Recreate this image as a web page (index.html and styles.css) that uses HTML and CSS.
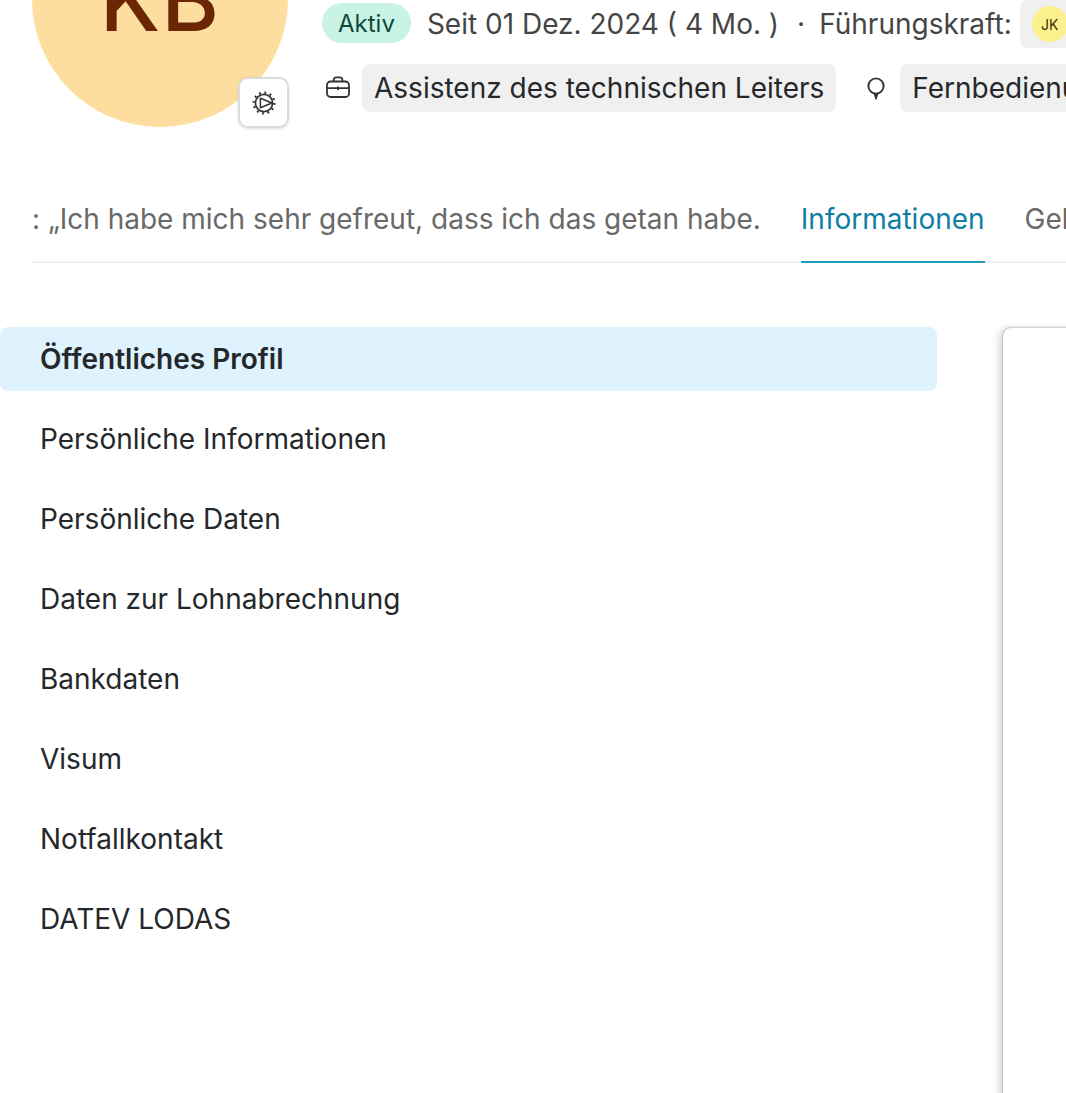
FILE: index.html
```html
<!DOCTYPE html>
<html lang="de">
<head>
<meta charset="utf-8">
<title>Profil</title>
<link rel="stylesheet" href="styles.css">
</head>
<body>
<div class="page">
  <header class="head">
    <div class="avatar">
      <span class="avatar-text">KB</span>
      <button class="gear" aria-label="Einstellungen">
        <svg width="26" height="26" viewBox="0 0 26 26" fill="none" stroke="#333" stroke-width="1.7">
          <circle cx="13" cy="13" r="8.6"/>
          <circle cx="13" cy="13" r="10.4" stroke-width="2.2" stroke-dasharray="1.9 3.55"/>
          <path d="M9.4 8.2 L20.8 13 L9.4 17.8 Z" stroke-linejoin="round" stroke-width="1.5"/>
        </svg>
      </button>
    </div>
    <div class="info">
      <div class="row">
        <span class="pill">Aktiv</span>
        <span class="since">Seit 01 Dez. 2024 ( 4 Mo. )</span>
        <span class="dot">·</span>
        <span class="since since-lead">Führungskraft:</span>
        <span class="chip chip-person"><span class="mini">JK</span></span>
      </div>
      <div class="row">
        <svg class="ico" width="26" height="26" viewBox="0 0 26 26" fill="none" stroke="#333" stroke-width="1.8">
          <rect x="2" y="6.5" width="22" height="15.5" rx="3.5"/>
          <path d="M8.6 6.3V5a2.6 2.6 0 0 1 2.6-2.6h3.6A2.6 2.6 0 0 1 17.4 5v1.3M2 13.2h22M13 11.5v3.4"/>
        </svg>
        <span class="chip">Assistenz des technischen Leiters</span>
        <svg class="ico ico-pin" width="26" height="26" viewBox="0 0 26 26" fill="none" stroke="#333" stroke-width="1.9">
          <circle cx="13" cy="11" r="7.6"/>
          <path d="M11.2 19h3.6L13 24.4Z" fill="#333" stroke-width="1"/>
        </svg>
        <span class="chip">Fernbedienung</span>
      </div>
    </div>
  </header>

  <nav class="tabs">
    <span class="tab">: „Ich habe mich sehr gefreut, dass ich das getan habe.</span>
    <span class="tab tab-active">Informationen</span>
    <span class="tab">Gehalt</span>
  </nav>

  <main class="content">
    <ul class="menu">
      <li class="menu-item menu-active">Öffentliches Profil</li>
      <li class="menu-item">Persönliche Informationen</li>
      <li class="menu-item">Persönliche Daten</li>
      <li class="menu-item">Daten zur Lohnabrechnung</li>
      <li class="menu-item">Bankdaten</li>
      <li class="menu-item">Visum</li>
      <li class="menu-item">Notfallkontakt</li>
      <li class="menu-item">DATEV LODAS</li>
    </ul>
    <section class="card"></section>
  </main>
</div>
</body>
</html>
```
FILE: styles.css
```css
* { box-sizing: border-box; }
html, body { margin: 0; height: 100%; overflow: hidden; background: #fff; }
body { font-family: Inter, "Noto Sans", sans-serif; font-size: 28px; color: #25282b; }

.page { width: 1066px; margin-top: -129px; }

.head { display: flex; gap: 34px; padding-left: 32px; height: 256px; white-space: nowrap; }

.avatar {
  flex: none; position: relative; width: 256px; height: 256px; border-radius: 50%;
  background: #fede9e; display: flex; align-items: center; justify-content: center;
}
.avatar-text { font-size: 88px; line-height: 1; font-weight: 500; color: #6a2605; letter-spacing: 1px; margin-top: -1px; }
.gear {
  position: absolute; right: -1px; bottom: -1px; width: 51px; height: 51px; padding: 0;
  display: flex; align-items: center; justify-content: center;
  background: #fff; border: 2px solid #dcdcdc; border-radius: 10px;
  box-shadow: 0 1px 3px rgba(0,0,0,.12);
}

.info { display: flex; flex-direction: column; padding-top: 129px; gap: 16px; min-width: 0; }
.row { display: flex; align-items: center; height: 48px; }

.pill {
  height: 40px; padding: 0 16px; display: flex; align-items: center; border-radius: 20px;
  background: #c9f4e5; color: #0d4a3b; font-size: 24px; margin-top: -2px;
}
.since { color: #454545; margin-left: 16px; margin-top: -1px; }
.dot { color: #454545; margin-left: 18px; margin-top: -1px; }
.since-lead { margin-left: 14px; }
.chip {
  display: flex; align-items: center; height: 48px; padding: 0 12px;
  background: #f0f0f0; border-radius: 8px; color: #25282b; flex: none;
}
.chip-person { margin-left: 8px; }
.mini {
  width: 36px; height: 36px; border-radius: 50%; background: #fbf08c; color: #3b2f0a;
  display: flex; align-items: center; justify-content: center; font-size: 14px;
}
.ico { flex: none; margin-left: 3px; margin-right: 11px; }
.ico-pin { margin-left: 27px; margin-right: 11px; }

.tabs {
  display: flex; gap: 40px; margin-left: 32px; margin-top: 48px; height: 88px;
  width: 1034px; overflow: hidden; white-space: nowrap;
  box-shadow: inset 0 -2px 0 #f0f0f0;
}
.tab { height: 88px; padding-top: 27px; line-height: 34px; color: #696969; flex: none; }
.tab-active { color: #0f7ea3; border-bottom: 2px solid #1f9cba; }

.content { display: flex; gap: 66px; margin-top: 64px; }
.menu { list-style: none; margin: 0; padding: 0; width: 937px; flex: none; display: flex; flex-direction: column; gap: 16px; }
.menu-item { height: 64px; display: flex; align-items: center; padding-left: 40px; border-radius: 8px; }
.menu-active { background: #dff3ff; font-weight: 600; }

.card {
  flex: none; width: 400px; height: 900px; margin-top: 1px; background: #fff; border-radius: 8px;
  box-shadow: 0 0 2px rgba(0,0,0,.45), -3px 1px 9px rgba(0,0,0,.18);
}
```
